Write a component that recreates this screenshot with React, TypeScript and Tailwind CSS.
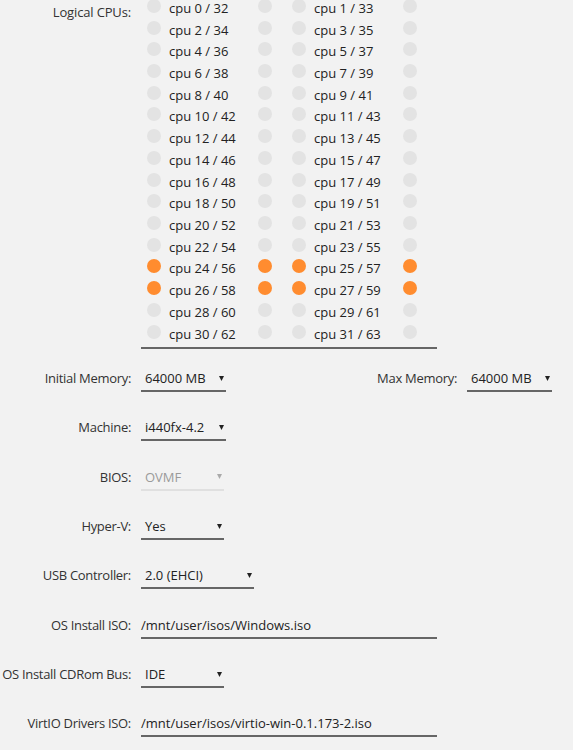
const font = { fontFamily: '"Open Sans", "Liberation Sans", sans-serif' };

const cpuRows = Array.from({ length: 16 }, (_, i) => ({
  left: `cpu ${i * 2} / ${i * 2 + 32}`,
  right: `cpu ${i * 2 + 1} / ${i * 2 + 33}`,
  on: i === 12 || i === 13,
}));

function Dot({ on }: { on: boolean }) {
  return (
    <span
      className={`block w-[14px] h-[14px] rounded-full shrink-0 ${
        on ? "bg-[#ff8c2f]" : "bg-[#e3e3e3]"
      }`}
    />
  );
}

function CpuPair({ label, on }: { label: string; on: boolean }) {
  return (
    <div className="flex items-center w-[147px]">
      <Dot on={on} />
      <span className="ml-[8px] w-[89px] whitespace-nowrap relative top-[2px] leading-[14px]">
        {label}
      </span>
      <Dot on={on} />
    </div>
  );
}

function Arrow({ muted }: { muted?: boolean }) {
  return (
    <svg width="5" height="5" viewBox="0 0 5 5" className="shrink-0">
      <polygon points="0,0 5,0 2.5,5" fill={muted ? "#aaa" : "#222"} />
    </svg>
  );
}

function Select({
  value,
  width,
  muted,
}: {
  value: string;
  width: string;
  muted?: boolean;
}) {
  return (
    <div
      className={`flex items-center justify-between h-[26px] leading-[24px] border-b-2 pl-[4px] pr-[2px] ${width} ${
        muted ? "border-[#e0e0e0] text-[#9a9a9a]" : "border-[#666] text-[#222]"
      }`}
    >
      <span className="whitespace-nowrap">{value}</span>
      <Arrow muted={muted} />
    </div>
  );
}

function TextInput({ value }: { value: string }) {
  return (
    <div className="h-[26px] leading-[24px] border-b-2 border-[#666] w-[296px] text-[#222] whitespace-nowrap">
      {value}
    </div>
  );
}

function Label({ children }: { children: string }) {
  return (
    <div className="w-[131px] shrink-0 text-right h-[26px] leading-[24px] text-[#333] whitespace-nowrap tracking-[-0.3px]">
      {children}
    </div>
  );
}

function Row({ label, children }: { label: string; children: React.ReactNode }) {
  return (
    <div className="flex items-center h-[49.33px]">
      <Label>{label}</Label>
      <div className="ml-[10px]">{children}</div>
    </div>
  );
}

export default function App() {
  return (
    <div
      className="bg-[#f2f2f2] min-h-[750px] text-[13px] text-[#222] overflow-hidden"
      style={font}
    >
      <div className="-mt-[5px]">
        <div className="flex">
          <div className="w-[131px] shrink-0 text-right text-[#333] pt-[6px] leading-[22px] tracking-[-0.15px]">
            Logical CPUs:
          </div>
          <div className="ml-[10px] w-[296px] border-b-2 border-[#666] pb-[4px] pl-[6px]">
            {cpuRows.map((r) => (
              <div key={r.left} className="flex items-center h-[21.73px]">
                <CpuPair label={r.left} on={r.on} />
                <CpuPair label={r.right} on={r.on} />
              </div>
            ))}
          </div>
        </div>

        <div className="mt-[6px]">
          <div className="flex items-center h-[49.33px] w-[552px]">
            <Label>Initial Memory:</Label>
            <div className="ml-[10px]">
              <Select value="64000 MB" width="w-[85px]" />
            </div>
            <div className="ml-auto flex items-center">
              <div className="h-[26px] leading-[24px] text-[#333] whitespace-nowrap tracking-[-0.3px]">
                Max Memory:
              </div>
              <div className="ml-[10px]">
                <Select value="64000 MB" width="w-[85px]" />
              </div>
            </div>
          </div>
          <Row label="Machine:">
            <Select value="i440fx-4.2" width="w-[85px]" />
          </Row>
          <Row label="BIOS:">
            <Select value="OVMF" width="w-[83px]" muted />
          </Row>
          <Row label="Hyper-V:">
            <Select value="Yes" width="w-[83px]" />
          </Row>
          <Row label="USB Controller:">
            <Select value="2.0 (EHCI)" width="w-[113px]" />
          </Row>
          <Row label="OS Install ISO:">
            <TextInput value="/mnt/user/isos/Windows.iso" />
          </Row>
          <Row label="OS Install CDRom Bus:">
            <Select value="IDE" width="w-[83px]" />
          </Row>
          <Row label="VirtIO Drivers ISO:">
            <TextInput value="/mnt/user/isos/virtio-win-0.1.173-2.iso" />
          </Row>
        </div>
      </div>
    </div>
  );
}
